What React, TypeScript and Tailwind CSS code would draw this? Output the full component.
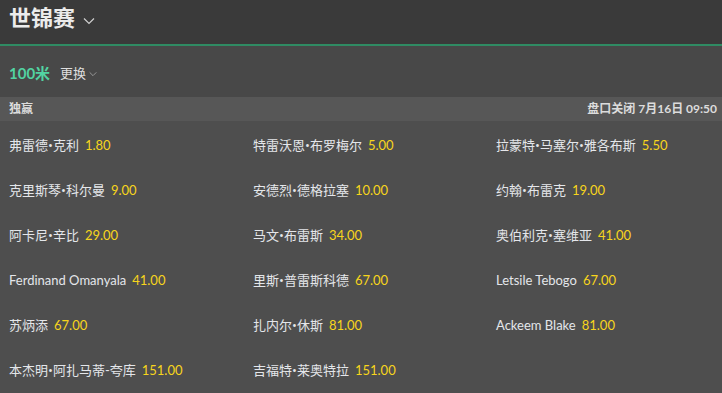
import React from 'react';

const runners: [string, string][] = [
  ['弗雷德•克利', '1.80'],
  ['特雷沃恩•布罗梅尔', '5.00'],
  ['拉蒙特•马塞尔•雅各布斯', '5.50'],
  ['克里斯琴•科尔曼', '9.00'],
  ['安德烈•德格拉塞', '10.00'],
  ['约翰•布雷克', '19.00'],
  ['阿卡尼•辛比', '29.00'],
  ['马文•布雷斯', '34.00'],
  ['奥伯利克•塞维亚', '41.00'],
  ['Ferdinand Omanyala', '41.00'],
  ['里斯•普雷斯科德', '67.00'],
  ['Letsile Tebogo', '67.00'],
  ['苏炳添', '67.00'],
  ['扎内尔•休斯', '81.00'],
  ['Ackeem Blake', '81.00'],
  ['本杰明•阿扎马蒂-夸库', '151.00'],
  ['吉福特•莱奥特拉', '151.00'],
];

const Chevron = ({ className }: { className?: string }) => (
  <svg viewBox="0 0 12 8" className={className} fill="none" stroke="currentColor" strokeWidth="1.2">
    <path d="M1 1.5l5 5 5-5" />
  </svg>
);

// the dot between name parts is narrow in the original, Lato's is too wide
const Name = ({ text }: { text: string }) => {
  const parts = text.split('•');
  return (
    <span>
      {parts.map((p, i) => (
        <React.Fragment key={i}>
          {i > 0 && <span className="font-['Open_Sans']">•</span>}
          {p}
        </React.Fragment>
      ))}
    </span>
  );
};

export default function App() {
  return (
    <div
      className="w-[722px] h-[393px] overflow-hidden bg-[#4e4e4e] text-[#e4e6ea]"
      style={{ fontFamily: 'Lato, "Noto Sans CJK SC", sans-serif' }}
    >
      <header className="h-[44px] bg-[#3a3a3a] px-[9px] flex items-center gap-[8px] pb-[8px]">
        <h1 className="text-[22px] font-bold leading-none text-[#ececec]">世锦赛</h1>
        <Chevron className="w-[12px] h-[8px] mt-[6px] text-[#cfcfcf]" />
      </header>
      <div className="h-[2px] bg-[#2f8b63]" />
      <div className="h-[51px] bg-[#484848] flex items-center px-[9px] pt-[4px]">
        <span className="text-[15px] font-bold text-[#52d3a2]">100米</span>
        <span className="ml-[10px] text-[13px] text-[#dedede]">更换</span>
        <Chevron className="ml-[3px] w-[8px] h-[6px] text-[#aaaaaa]" />
      </div>
      <div className="h-[24px] bg-[#575757] flex items-center justify-between pl-[9px] pr-[5px] text-[12px] font-bold text-[#dcdcdc]">
        <span>独赢</span>
        <span>盘口关闭 7月16日 09:50</span>
      </div>
      <div className="grid grid-cols-[244px_243px_1fr] pl-[9px] pt-[2px]">
        {runners.map(([name, odds]) => (
          <div key={name} className="h-[45px] flex items-center text-[13px]">
            <Name text={name} />
            <span className="ml-[6px] text-[#f7d51c]">{odds}</span>
          </div>
        ))}
      </div>
    </div>
  );
}
